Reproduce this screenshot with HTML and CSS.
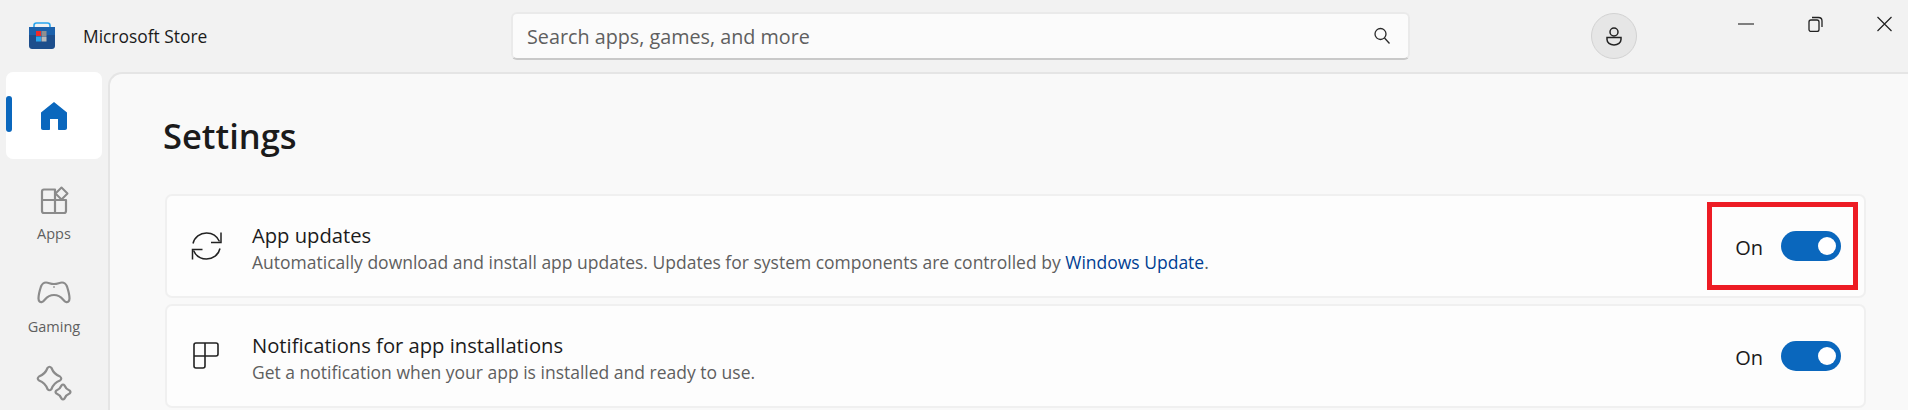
FILE: index.html
```html
<!DOCTYPE html>
<html lang="en">
<head>
    <meta charset="UTF-8">
    <meta name="viewport" content="width=device-width, initial-scale=1.0">
    <title>Microsoft Store</title>
    <link rel="stylesheet" href="styles.css">
</head>
<body>
    <header class="titlebar">
        <div class="brand">
            <svg class="logo" width="28" height="28" viewBox="0 0 28 28">
                <path d="M6 6V3.500C6 2 7 1 8.500 1h11C21 1 22 2 22 3.500V6" fill="none" stroke="#2aa5ee" stroke-width="1.600"/>
                <path d="M1 5h26v19c0 2-1.500 3-3 3H4c-1.500 0-3-1-3-3z" fill="#1d4e8c"/>
                <path d="M1 5h26v8H1z" fill="#1c61ab"/>
                <rect x="8" y="9" width="5" height="5" fill="#ef2a2a"/>
                <rect x="13.500" y="9" width="5" height="5" fill="#8f8f8f"/>
                <rect x="8" y="14.500" width="5" height="5" fill="#2aa5ee"/>
                <rect x="13.500" y="14.500" width="5" height="5" fill="#b9b9b9"/>
            </svg>
            <span class="brand-name">Microsoft Store</span>
        </div>
        <div class="search">
            <span class="search-text">Search apps, games, and more</span>
            <svg width="18" height="18" viewBox="0 0 18 18" fill="none" stroke="#2b2b2b" stroke-width="1.300">
                <circle cx="7.500" cy="7" r="5.500"/>
                <path d="M11.500 11l5 5.500"/>
            </svg>
        </div>
        <div class="avatar">
            <svg width="18" height="19" viewBox="0 0 18 19" fill="none" stroke="#222" stroke-width="1.500">
                <circle cx="9" cy="5" r="4"/>
                <path d="M2 10.500h14v2c0 3-3 5.500-7 5.500s-7-2.500-7-5.500z"/>
            </svg>
        </div>
        <div class="window-controls">
            <svg width="16" height="16" viewBox="0 0 16 16" stroke="#333" stroke-width="1.200" fill="none">
                <path d="M0 8h16"/>
            </svg>
            <svg width="15" height="16" viewBox="0 0 15 16" stroke="#222" stroke-width="1.300" fill="none">
                <rect x="1" y="4" width="10" height="11.500" rx="2"/>
                <path d="M4 1.500h6.500c2 0 3.500 1.500 3.500 3.500V11"/>
            </svg>
            <svg width="15" height="16" viewBox="0 0 15 16" stroke="#222" stroke-width="1.200" fill="none">
                <path d="M.5 1l14 14M14.500 1L.5 15"/>
            </svg>
        </div>
    </header>

    <div class="main">
        <nav class="sidenav">
            <div class="nav-home">
                <span class="nav-marker"></span>
                <svg width="30" height="32" viewBox="0 0 30 32">
                    <path d="M15 2L28 12.500V28c0 1.200-.8 2-2 2h-6c-.6 0-1-.4-1-1V19h-8v10c0 .6-.4 1-1 1H4c-1.200 0-2-.8-2-2V12.500z" fill="#0a67bd"/>
                </svg>
            </div>
            <div class="nav-item">
                <svg width="30" height="30" viewBox="0 0 30 30" fill="none" stroke="#8b8b8b" stroke-width="2.200" stroke-linejoin="round">
                    <path d="M16 4.500H5C3.800 4.500 3 5.300 3 6.500V26c0 1.200.8 2 2 2h20c1.200 0 2-.8 2-2V15H16zM16 15H3M16 15v13"/>
                    <path d="M22.500 2.500l6 6-6 6-6-6z" stroke-width="2"/>
                </svg>
                <span>Apps</span>
            </div>
            <div class="nav-item nav-gaming">
                <svg width="34" height="24" viewBox="0 0 34 24" fill="none" stroke="#8b8b8b" stroke-width="2.200" stroke-linejoin="round">
                    <path d="M9 2.500c3 0 4 1.500 8 1.500s5-1.500 8-1.500c3 0 4 1.500 5 4 1 3 2.500 8 2.500 12 0 3-2 4-3.500 3.500-3-1-4-7-12-7s-9 6-12 7c-1.500.5-3.500-.5-3.500-3.500 0-4 1.500-9 2.500-12 1-2.500 2-4 5-4z"/>
                    <circle cx="17" cy="7" r=".5" stroke-width="1"/>
                </svg>
                <span>Gaming</span>
            </div>
            <div class="nav-item nav-sparkle">
                <svg width="36" height="36" viewBox="0 0 36 36" fill="none" stroke="#8b8b8b" stroke-width="2.200" stroke-linejoin="round">
                    <path d="M11.500 3Q13.500 .5 15.500 3C17 7 20 10 24 11.500Q26.500 13.500 24 15.500C20 17 17 20 15.500 24Q13.500 26.500 11.500 24C10 20 7 17 3 15.500Q.5 13.500 3 11.500C7 10 10 7 11.500 3z"/>
                    <path d="M25.500 20.500Q27 18.500 28.500 20.500C29.500 23 31 24.500 33.500 25.500Q35.500 27 33.500 28.500C31 29.500 29.500 31 28.500 33.500Q27 35.500 25.500 33.500C24.500 31 23 29.500 20.500 28.500Q18.500 27 20.500 25.500C23 24.500 24.500 23 25.500 20.500z"/>
                </svg>
            </div>
        </nav>

        <section class="content">
            <h1>Settings</h1>

            <div class="card">
                <svg class="card-icon" width="32" height="32" viewBox="0 0 32 32" fill="none" stroke="#222" stroke-width="1.500">
                    <path d="M2 13.500C3.500 7 9 3 15.500 3c6 0 10.500 3 13 8.500"/>
                    <path d="M30 2.500v10H20"/>
                    <path d="M29 18.500C27.500 25 22 29 15.500 29c-6 0-10.500-3-13-8.500"/>
                    <path d="M1.500 29.500v-10h10"/>
                </svg>
                <div class="card-text">
                    <div class="card-title">App updates</div>
                    <div class="card-sub">Automatically download and install app updates. Updates for system components are controlled by <a href="#">Windows Update</a>.</div>
                </div>
                <div class="switch-wrap">
                    <span class="switch-label">On</span>
                    <span class="switch"><span class="knob"></span></span>
                </div>
                <div class="highlight"></div>
            </div>

            <div class="card">
                <svg class="card-icon" width="32" height="32" viewBox="0 0 32 32" fill="none" stroke="#222" stroke-width="1.600" stroke-linejoin="round">
                    <path d="M14 3H5C3.500 3 3 3.500 3 5v21c0 1.500.5 2 2 2h7c1.500 0 2-.5 2-2V3zM14 3h11c1.500 0 2 .5 2 2v9c0 1.500-.5 2-2 2H3"/>
                </svg>
                <div class="card-text">
                    <div class="card-title">Notifications for app installations</div>
                    <div class="card-sub">Get a notification when your app is installed and ready to use.</div>
                </div>
                <div class="switch-wrap">
                    <span class="switch-label">On</span>
                    <span class="switch"><span class="knob"></span></span>
                </div>
            </div>
        </section>
    </div>
</body>
</html>
```

FILE: styles.css
```css
html, body {
    margin: 0;
    padding: 0;
    height: 410px;
    overflow: hidden;
}
body {
    font-family: "Open Sans", "Noto Sans", sans-serif;
    background-color: #f2f2f2;
    color: #1b1b1b;
}
.titlebar {
    height: 72px;
    display: flex;
    align-items: flex-start;
}
.brand {
    width: 511px;
    flex: none;
    display: flex;
    align-items: center;
    padding: 22px 0 0 28px;
    box-sizing: border-box;
}
.brand-name {
    margin-left: 27px;
    font-size: 17.400px;
    margin-top: -1px;
}
.search {
    width: 899px;
    height: 48px;
    margin-top: 12px;
    flex: none;
    box-sizing: border-box;
    display: flex;
    align-items: center;
    justify-content: space-between;
    padding: 0 17px 0 14px;
    background-color: #fbfbfb;
    border: 2px solid #eaeaea;
    border-bottom-color: #c9c9c9;
    border-radius: 6px;
}
.search-text {
    font-size: 19.750px;
    color: #5f5f5f;
}
.avatar {
    width: 46px;
    height: 46px;
    margin: 13px 0 0 181px;
    flex: none;
    box-sizing: border-box;
    display: flex;
    align-items: center;
    justify-content: center;
    background-color: #e6e6e6;
    border: 1px solid #d2d2d2;
    border-radius: 50%;
}
.window-controls {
    margin: 16px 0 0 101px;
    display: flex;
    align-items: center;
    gap: 54px;
}
.main {
    display: flex;
    height: 338px;
}
.sidenav {
    width: 108px;
    flex: none;
    box-sizing: border-box;
    padding-left: 6px;
    padding-right: 6px;
}
.nav-home {
    height: 87px;
    background-color: #fff;
    border-radius: 7px;
    display: flex;
    align-items: center;
    justify-content: center;
    position: relative;
}
.nav-marker {
    position: absolute;
    left: 0;
    top: 24px;
    width: 6px;
    height: 36px;
    background-color: #0a67bd;
    border-radius: 3px;
}
.nav-item {
    display: flex;
    flex-direction: column;
    align-items: center;
    font-size: 14.500px;
    color: #5f5f5f;
    padding-top: 26px;
}
.nav-item span {
    margin-top: 9px;
}
.nav-gaming {
    padding-top: 37px;
}
.nav-gaming span {
    margin-top: 13px;
}
.nav-sparkle {
    padding-top: 29px;
}
.content {
    flex: 1;
    background-color: #f9f9f9;
    border-top: 2px solid #e5e5e5;
    border-left: 2px solid #e5e5e5;
    border-top-left-radius: 14px;
    padding: 0 42px 0 55px;
}
h1 {
    margin: 0 0 0 -2px;
    padding-top: 40px;
    height: 80px;
    font-size: 34.500px;
    line-height: 44px;
    font-weight: 600;
}
.card {
    height: 104px;
    box-sizing: border-box;
    margin-bottom: 6px;
    display: flex;
    align-items: center;
    background-color: #fdfdfd;
    border: 2px solid #f0f0f0;
    border-radius: 7px;
    padding: 0 23px 0 24px;
    position: relative;
}
.card-icon {
    flex: none;
}
.card-text {
    flex: 1;
    margin-left: 29px;
    margin-top: 3px;
}
.card-title {
    font-size: 20.200px;
    line-height: 27px;
}
.card-sub {
    font-size: 17.500px;
    line-height: 24px;
    margin-top: 1px;
    color: #5f5f5f;
}
.card-sub a {
    color: #003e92;
    text-decoration: none;
}
.switch-wrap {
    display: flex;
    align-items: center;
    gap: 18px;
    font-size: 20px;
}
.switch-label {
    margin-top: 2px;
}
.switch {
    width: 60px;
    height: 30px;
    background-color: #0a67bd;
    border-radius: 15px;
    display: flex;
    align-items: center;
    justify-content: flex-end;
    padding-right: 5px;
    box-sizing: border-box;
}
.knob {
    width: 18px;
    height: 18px;
    background-color: #fff;
    border-radius: 50%;
}
.highlight {
    position: absolute;
    left: 1540px;
    top: 6px;
    width: 151px;
    height: 88px;
    box-sizing: border-box;
    border: 5px solid #ed1c24;
}
```
